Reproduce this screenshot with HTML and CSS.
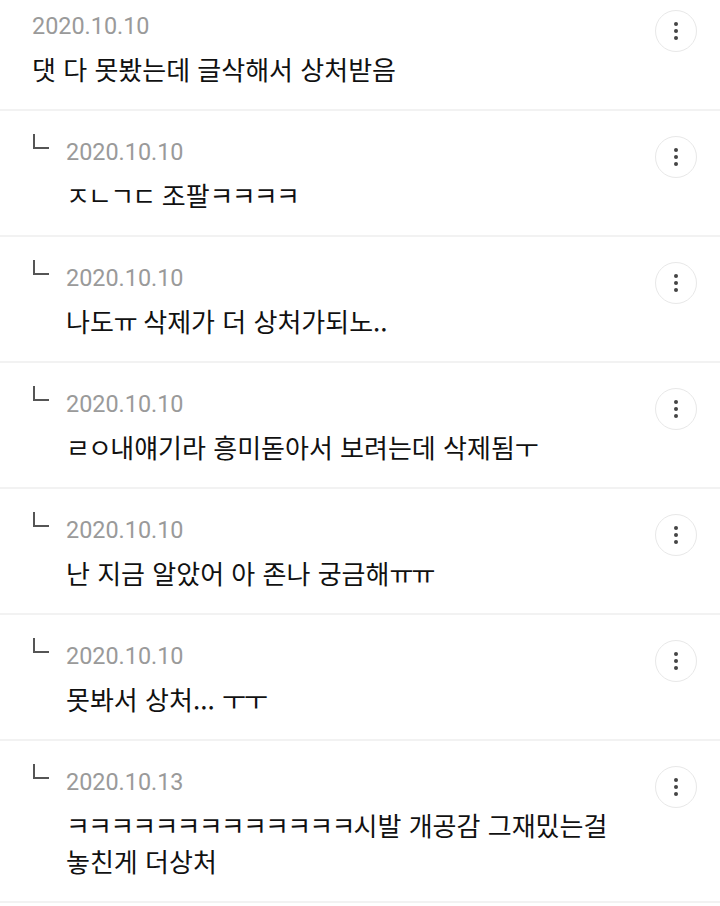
FILE: index.html
```html
<!DOCTYPE html>
<html lang="ko">
<head>
<meta charset="utf-8">
<title>댓글</title>
<link rel="stylesheet" href="styles.css">
</head>
<body>
<ul class="comments">
  <li class="comment comment--top">
    <div class="comment__body">
      <div class="comment__date">2020.10.10</div>
      <p class="comment__text">댓 다 못봤는데 글삭해서 상처받음</p>
    </div>
    <button class="more" aria-label="더보기"><span></span><span></span><span></span></button>
  </li>
  <li class="comment comment--reply">
    <svg class="reply-mark" viewBox="0 0 18 18" width="18" height="18"><path d="M2 1V15H17" fill="none" stroke="#555" stroke-width="2"/></svg>
    <div class="comment__body">
      <div class="comment__date">2020.10.10</div>
      <p class="comment__text"><span class="jamo">ㅈㄴㄱㄷ</span> 조팔<span class="jamo">ㅋㅋㅋㅋ</span></p>
    </div>
    <button class="more" aria-label="더보기"><span></span><span></span><span></span></button>
  </li>
  <li class="comment comment--reply">
    <svg class="reply-mark" viewBox="0 0 18 18" width="18" height="18"><path d="M2 1V15H17" fill="none" stroke="#555" stroke-width="2"/></svg>
    <div class="comment__body">
      <div class="comment__date">2020.10.10</div>
      <p class="comment__text">나도<span class="jamo">ㅠ</span> 삭제가 더 상처가되노..</p>
    </div>
    <button class="more" aria-label="더보기"><span></span><span></span><span></span></button>
  </li>
  <li class="comment comment--reply">
    <svg class="reply-mark" viewBox="0 0 18 18" width="18" height="18"><path d="M2 1V15H17" fill="none" stroke="#555" stroke-width="2"/></svg>
    <div class="comment__body">
      <div class="comment__date">2020.10.10</div>
      <p class="comment__text"><span class="jamo">ㄹㅇ</span>내얘기라 흥미돋아서 보려는데 삭제됨<span class="jamo">ㅜ</span></p>
    </div>
    <button class="more" aria-label="더보기"><span></span><span></span><span></span></button>
  </li>
  <li class="comment comment--reply">
    <svg class="reply-mark" viewBox="0 0 18 18" width="18" height="18"><path d="M2 1V15H17" fill="none" stroke="#555" stroke-width="2"/></svg>
    <div class="comment__body">
      <div class="comment__date">2020.10.10</div>
      <p class="comment__text">난 지금 알았어 아 존나 궁금해<span class="jamo">ㅠㅠ</span></p>
    </div>
    <button class="more" aria-label="더보기"><span></span><span></span><span></span></button>
  </li>
  <li class="comment comment--reply">
    <svg class="reply-mark" viewBox="0 0 18 18" width="18" height="18"><path d="M2 1V15H17" fill="none" stroke="#555" stroke-width="2"/></svg>
    <div class="comment__body">
      <div class="comment__date">2020.10.10</div>
      <p class="comment__text">못봐서 상처... <span class="jamo">ㅜㅜ</span></p>
    </div>
    <button class="more" aria-label="더보기"><span></span><span></span><span></span></button>
  </li>
  <li class="comment comment--reply">
    <svg class="reply-mark" viewBox="0 0 18 18" width="18" height="18"><path d="M2 1V15H17" fill="none" stroke="#555" stroke-width="2"/></svg>
    <div class="comment__body">
      <div class="comment__date">2020.10.13</div>
      <p class="comment__text"><span class="jamo">ㅋㅋㅋㅋㅋㅋㅋㅋㅋㅋㅋㅋㅋ</span>시발 개공감 그재밌는걸<br>놓친게 더상처</p>
    </div>
    <button class="more" aria-label="더보기"><span></span><span></span><span></span></button>
  </li>
</ul>
</body>
</html>
```

FILE: styles.css
```css
html, body {
  margin: 0;
  padding: 0;
  background: #fff;
}

body {
  font-family: "Noto Sans CJK KR", "Noto Sans", sans-serif;
  color: #111;
}

.comments {
  list-style: none;
  margin: 0;
  padding: 0;
}

.comment {
  display: flex;
  align-items: flex-start;
  padding: 25px 23px 22px 32px;
  border-bottom: 2px solid #f2f2f2;
}

.comment--top {
  padding-top: 10px;
  padding-bottom: 22px;
}

.reply-mark {
  flex: none;
  margin: -3px 16px 0 0;
  display: block;
}

.comment__body {
  flex: 1;
  min-width: 0;
}

.comment__date {
  font-family: Roboto, "Noto Sans", sans-serif;
  font-size: 23.4px;
  line-height: 32px;
  color: #9a9a9a;
}

.comment__text {
  margin: 9px 0 0;
  font-size: 26px;
  line-height: 36px;
  color: #111;
}

/* bare consonant/vowel runs sit a little tighter than syllables */
.jamo {
  letter-spacing: -1.8px;
}

.more {
  flex: none;
  width: 42px;
  height: 42px;
  padding: 0;
  border: 1px solid #e8e8e8;
  border-radius: 50%;
  background: #fff;
  display: flex;
  flex-direction: column;
  align-items: center;
  justify-content: center;
  gap: 3px;
}

.more span {
  width: 4px;
  height: 4px;
  border-radius: 50%;
  background: #444;
}
```
